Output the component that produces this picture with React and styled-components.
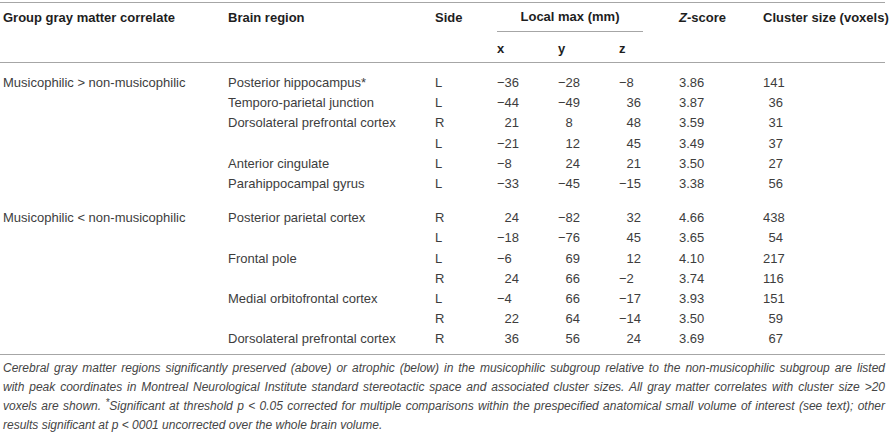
import styled, { createGlobalStyle } from 'styled-components';

const GlobalStyle = createGlobalStyle`
  body {
    margin: 0;
    background: #ffffff;
    font-family: "Liberation Sans", Arial, Helvetica, sans-serif;
  }
`;

const groups = [
  {
    label: 'Musicophilic > non-musicophilic',
    rows: [
      ['Posterior hippocampus*', 'L', -36, -28, -8, '3.86', 141],
      ['Temporo-parietal junction', 'L', -44, -49, 36, '3.87', 36],
      ['Dorsolateral prefrontal cortex', 'R', 21, 8, 48, '3.59', 31],
      ['', 'L', -21, 12, 45, '3.49', 37],
      ['Anterior cingulate', 'L', -8, 24, 21, '3.50', 27],
      ['Parahippocampal gyrus', 'L', -33, -45, -15, '3.38', 56],
    ],
  },
  {
    label: 'Musicophilic < non-musicophilic',
    rows: [
      ['Posterior parietal cortex', 'R', 24, -82, 32, '4.66', 438],
      ['', 'L', -18, -76, 45, '3.65', 54],
      ['Frontal pole', 'L', -6, 69, 12, '4.10', 217],
      ['', 'R', 24, 66, -2, '3.74', 116],
      ['Medial orbitofrontal cortex', 'L', -4, 66, -17, '3.93', 151],
      ['', 'R', 22, 64, -14, '3.50', 59],
      ['Dorsolateral prefrontal cortex', 'R', 36, 56, 24, '3.69', 67],
    ],
  },
];

// negative values start with the minus; positive ones keep a hidden minus so digits line up
const Coord = ({ value }) =>
  value < 0 ? (
    <span>−{Math.abs(value)}</span>
  ) : (
    <span>
      <Pad>−</Pad>
      {value}
    </span>
  );

const App = () => {
  return (
    <Page>
      <GlobalStyle />
      <Table>
        <colgroup>
          <col style={{ width: 228 }} />
          <col style={{ width: 207 }} />
          <col style={{ width: 62 }} />
          <col style={{ width: 61 }} />
          <col style={{ width: 61 }} />
          <col style={{ width: 60 }} />
          <col style={{ width: 84 }} />
          <col style={{ width: 122 }} />
        </colgroup>
        <thead>
          <HeadRow>
            <HeadCell rowSpan={2} $first>
              Group gray matter correlate
            </HeadCell>
            <HeadCell rowSpan={2}>Brain region</HeadCell>
            <HeadCell rowSpan={2}>Side</HeadCell>
            <GroupCell colSpan={3}>
              <GroupLabel>Local max (mm)</GroupLabel>
            </GroupCell>
            <HeadCell rowSpan={2}>
              <ZLetter>Z</ZLetter>-score
            </HeadCell>
            <HeadCell rowSpan={2}>Cluster size (voxels)</HeadCell>
          </HeadRow>
          <SubRow>
            <AxisCell>x</AxisCell>
            <AxisCell>y</AxisCell>
            <AxisCell>z</AxisCell>
          </SubRow>
        </thead>
        <tbody>
          {groups.map((group, gi) =>
            group.rows.map((row, ri) => (
              <DataRow
                key={`${gi}-${ri}`}
                $top={gi === 0 && ri === 0 ? 10 : ri === 0 ? 14 : 0}
                $bottom={gi === groups.length - 1 && ri === group.rows.length - 1 ? 4 : 0}
              >
                <Cell $first>{ri === 0 ? group.label : ''}</Cell>
                <Cell>{row[0]}</Cell>
                <Cell>{row[1]}</Cell>
                <Cell>
                  <Coord value={row[2]} />
                </Cell>
                <Cell>
                  <Coord value={row[3]} />
                </Cell>
                <Cell>
                  <Coord value={row[4]} />
                </Cell>
                <Cell>{row[5]}</Cell>
                <Cell $right>{row[6]}</Cell>
              </DataRow>
            ))
          )}
        </tbody>
      </Table>
      <Caption>
        <CaptionLine>
          Cerebral gray matter regions significantly preserved (above) or atrophic (below) in the
          musicophilic subgroup relative to the non-musicophilic subgroup are listed
        </CaptionLine>
        <CaptionLine>
          with peak coordinates in Montreal Neurological Institute standard stereotactic space and
          associated cluster sizes. All gray matter correlates with cluster size &gt;20
        </CaptionLine>
        <CaptionLine>
          voxels are shown. <Star>*</Star>Significant at threshold p &lt; 0.05 corrected for multiple
          comparisons within the prespecified anatomical small volume of interest (see text); other
        </CaptionLine>
        <CaptionLine $last>
          results significant at p &lt; 0001 uncorrected over the whole brain volume.
        </CaptionLine>
      </Caption>
    </Page>
  );
};

export default App;

const Page = styled.div`
  width: 885px;
  padding-top: 2px;
`;

const Table = styled.table`
  width: 885px;
  table-layout: fixed;
  border-collapse: collapse;
  border-top: 1px solid #a6a6a6;
  border-bottom: 1px solid #a6a6a6;
  font-size: 13px;
  color: #3d3d3d;
`;

const HeadRow = styled.tr`
  height: 29px;
`;

const SubRow = styled.tr`
  height: 31px;
`;

const HeadCell = styled.th`
  text-align: left;
  vertical-align: top;
  padding: 7px 0 0 ${(props) => (props.$first ? '3px' : '0')};
  line-height: 15px;
  font-weight: bold;
  color: #1e1e1e;
  white-space: nowrap;
  border-bottom: 1px solid #a6a6a6;
`;

const GroupCell = styled.th`
  padding: 0;
  vertical-align: bottom;
  font-weight: bold;
  color: #1e1e1e;
`;

const GroupLabel = styled.div`
  width: 146px;
  text-align: center;
  line-height: 15px;
  padding-bottom: 7px;
  border-bottom: 1px solid #a6a6a6;
`;

const AxisCell = styled.th`
  text-align: left;
  vertical-align: bottom;
  padding: 0 0 6px;
  line-height: 15px;
  font-weight: bold;
  color: #1e1e1e;
  border-bottom: 1px solid #a6a6a6;
`;

const ZLetter = styled.i`
  font-style: italic;
`;

const DataRow = styled.tr`
  & > td {
    padding-top: ${(props) => props.$top}px;
    padding-bottom: ${(props) => props.$bottom}px;
  }
`;

const Cell = styled.td`
  padding-left: ${(props) => (props.$first ? '3px' : '0')};
  padding-right: ${(props) => (props.$right ? '102px' : '0')};
  text-align: ${(props) => (props.$right ? 'right' : 'left')};
  line-height: 20.2px;
  white-space: nowrap;
  vertical-align: bottom;
`;

const Pad = styled.span`
  visibility: hidden;
`;

const Caption = styled.div`
  width: 882px;
  padding: 4px 0 0 3px;
  font-size: 12px;
  line-height: 19px;
  font-style: italic;
  color: #454545;
`;

const Star = styled.span`
  font-size: 10px;
  vertical-align: 4px;
  line-height: 0;
`;

const CaptionLine = styled.div`
  text-align: ${(props) => (props.$last ? 'left' : 'justify')};
  text-align-last: ${(props) => (props.$last ? 'left' : 'justify')};
`;
